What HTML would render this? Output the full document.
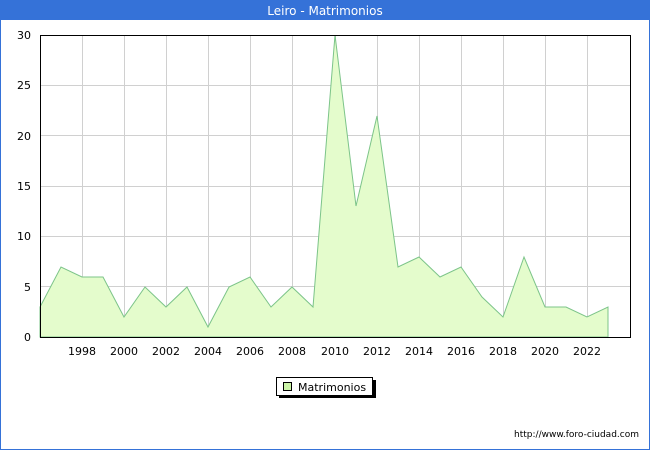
<!DOCTYPE html>
<html><head><style>
body{margin:0;width:650px;height:450px;overflow:hidden;font-family:"DejaVu Sans","Liberation Sans",sans-serif}
</style></head><body>
<svg width="650" height="450" xmlns="http://www.w3.org/2000/svg" font-family="DejaVu Sans, Liberation Sans, sans-serif">
<rect x="0.5" y="0.5" width="649" height="449" fill="#fff" stroke="#3572d8"/>
<rect x="0" y="0" width="650" height="20" fill="#3572d8"/>
<text x="325" y="15" fill="#fff" font-size="12" text-anchor="middle">Leiro - Matrimonios</text>
<g stroke="#d0d0d0" stroke-width="1">
<line x1="82.5" y1="35" x2="82.5" y2="337"/><line x1="124.5" y1="35" x2="124.5" y2="337"/><line x1="166.5" y1="35" x2="166.5" y2="337"/><line x1="208.5" y1="35" x2="208.5" y2="337"/><line x1="250.5" y1="35" x2="250.5" y2="337"/><line x1="292.5" y1="35" x2="292.5" y2="337"/><line x1="335.5" y1="35" x2="335.5" y2="337"/><line x1="377.5" y1="35" x2="377.5" y2="337"/><line x1="419.5" y1="35" x2="419.5" y2="337"/><line x1="461.5" y1="35" x2="461.5" y2="337"/><line x1="503.5" y1="35" x2="503.5" y2="337"/><line x1="545.5" y1="35" x2="545.5" y2="337"/><line x1="587.5" y1="35" x2="587.5" y2="337"/>
<line x1="40" y1="286.5" x2="630" y2="286.5"/><line x1="40" y1="236.5" x2="630" y2="236.5"/><line x1="40" y1="186.5" x2="630" y2="186.5"/><line x1="40" y1="135.5" x2="630" y2="135.5"/><line x1="40" y1="85.5" x2="630" y2="85.5"/>
</g>
<polygon fill="#e4fccc" stroke="#7cc489" stroke-width="1" points="40,337 40,307 61,267 82,277 103,277 124,317 145,287 166,307 187,287 208,327 229,287 250,277 271,307 292,287 313,307 335,35 356,206 377,116 398,267 419,257 440,277 461,267 482,297 503,317 524,257 545,307 566,307 587,317 608,307 608,337"/>
<rect x="40.5" y="35.5" width="590" height="302" fill="none" stroke="#000"/>
<g font-size="11" fill="#000" text-anchor="end">
<text x="31" y="341">0</text><text x="31" y="291">5</text><text x="31" y="240">10</text><text x="31" y="190">15</text><text x="31" y="140">20</text><text x="31" y="89">25</text><text x="31" y="39">30</text>
</g>
<g font-size="11" fill="#000" text-anchor="middle">
<text x="82" y="355">1998</text><text x="124" y="355">2000</text><text x="166" y="355">2002</text><text x="208" y="355">2004</text><text x="250" y="355">2006</text><text x="292" y="355">2008</text><text x="335" y="355">2010</text><text x="377" y="355">2012</text><text x="419" y="355">2014</text><text x="461" y="355">2016</text><text x="503" y="355">2018</text><text x="545" y="355">2020</text><text x="587" y="355">2022</text>
</g>
<rect x="279" y="380" width="97" height="18" fill="#000"/>
<rect x="276.5" y="377.5" width="96" height="18" fill="#fff" stroke="#000"/>
<rect x="283.5" y="382.5" width="8" height="8" fill="#ccf5a8" stroke="#000"/>
<text x="298" y="391" font-size="11">Matrimonios</text>
<text x="639" y="437" font-size="9" text-anchor="end">http://www.foro-ciudad.com</text>
</svg>
</body></html>
